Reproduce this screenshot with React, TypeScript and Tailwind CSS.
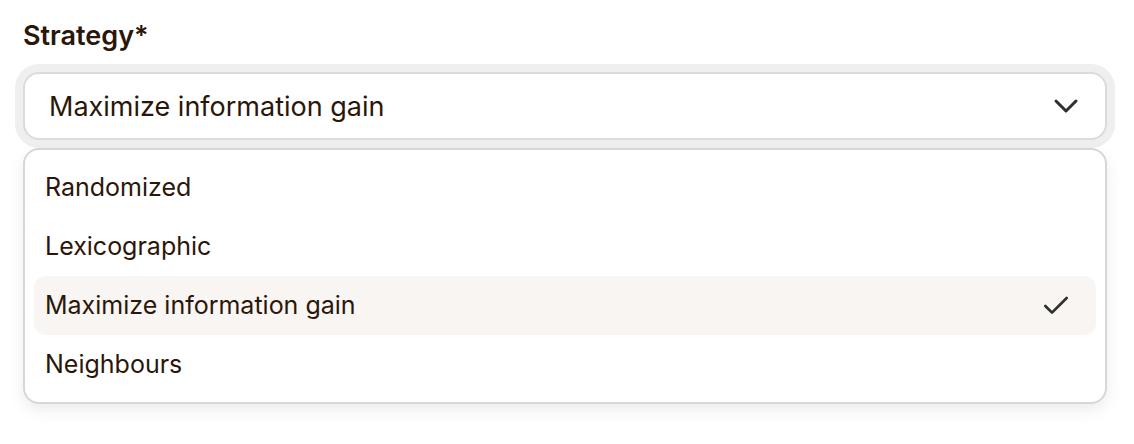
import { Check, ChevronDown } from 'lucide-react';

const OPTIONS = ['Randomized', 'Lexicographic', 'Maximize information gain', 'Neighbours'];
const SELECTED = 'Maximize information gain';

export default function App() {
	return (
		<div className="min-h-screen bg-white px-[23px] pt-[16px] font-['Inter',sans-serif] text-[#2b1709]">
			<div className="w-[1084px]">
				<label className="block text-[27px] font-semibold leading-[40px]">Strategy*</label>
				<button className="mt-[16px] flex h-[68px] w-full items-center justify-between rounded-[16px] border-2 border-[#dddbd9] bg-white pl-[24px] pr-[19px] text-left shadow-[0_0_0_8px_#efefef]">
					<span className="text-[27px] leading-none">{SELECTED}</span>
					<ChevronDown size={40} strokeWidth={1.8} className="text-[#2f2f2f]" />
				</button>
				<div className="mt-[8px] rounded-[16px] border-2 border-[#d9d7d5] bg-white px-[9px] py-[8px] shadow-[0_6px_16px_rgba(0,0,0,0.08)]">
					{OPTIONS.map((option) => (
						<div
							key={option}
							className={
								option === SELECTED
									? 'flex h-[59px] items-center justify-between rounded-[12px] bg-[#f8f5f2] pl-[11px] pr-[24px]'
									: 'flex h-[59px] items-center justify-between rounded-[12px] pl-[11px] pr-[24px]'
							}
						>
							<span className="text-[25px] leading-none">{option}</span>
							{option === SELECTED && <Check size={32} strokeWidth={2} className="text-[#2f2f2f]" />}
						</div>
					))}
				</div>
			</div>
		</div>
	);
}
